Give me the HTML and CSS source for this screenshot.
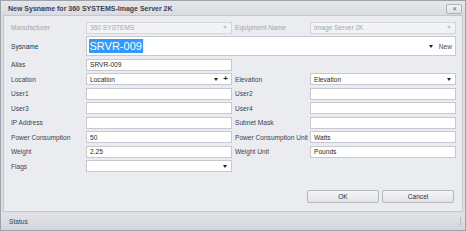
FILE: index.html
```html
<!DOCTYPE html>
<html>
<head>
<meta charset="utf-8">
<link rel="stylesheet" href="styles.css">
</head>
<body>
<div class="window">
  <div class="titlebar">
    <span class="title">New Sysname for 360 SYSTEMS-Image Server 2K</span>
    <span class="close">✕</span>
  </div>
  <div class="content">
    <div class="grid">
      <div class="label disabled">Manufacturer</div>
      <div class="field dis combo"><span>360 SYSTEMS</span><i class="arrow light"></i></div>
      <div class="label r disabled">Equipment Name</div>
      <div class="field dis combo"><span>Image Server 2K</span><i class="arrow light"></i></div>

      <div class="label strong">Sysname</div>
      <div class="field big span3"><span class="sel">SRVR-009</span><i class="arrow"></i><span class="new">New</span></div>

      <div class="label">Alias</div>
      <div class="field"><span>SRVR-009</span></div>
      <div></div><div></div>

      <div class="label">Location</div>
      <div class="field combo"><span>Location</span><i class="arrow"></i><span class="plus">+</span></div>
      <div class="label r">Elevation</div>
      <div class="field combo"><span>Elevation</span><i class="arrow"></i></div>

      <div class="label">User1</div>
      <div class="field"></div>
      <div class="label r">User2</div>
      <div class="field"></div>

      <div class="label">User3</div>
      <div class="field"></div>
      <div class="label r">User4</div>
      <div class="field"></div>

      <div class="label">IP Address</div>
      <div class="field"></div>
      <div class="label r">Subnet Mask</div>
      <div class="field"></div>

      <div class="label">Power Consumption</div>
      <div class="field"><span>50</span></div>
      <div class="label r">Power Consumption Unit</div>
      <div class="field"><span>Watts</span></div>

      <div class="label">Weight</div>
      <div class="field"><span>2.25</span></div>
      <div class="label r">Weight Unit</div>
      <div class="field"><span>Pounds</span></div>

      <div class="label">Flags</div>
      <div class="field combo"><span></span><i class="arrow"></i></div>
      <div></div><div></div>
    </div>
    <div class="buttons">
      <div class="btn">OK</div>
      <div class="btn">Cancel</div>
    </div>
  </div>
  <div class="statusbar"><span>Status</span><i class="grip"></i></div>
</div>
</body>
</html>
```
FILE: styles.css
```css
* { box-sizing: border-box; }
html, body { margin: 0; padding: 0; }
body {
  width: 466px;
  height: 231px;
  overflow: hidden;
  font-family: "Liberation Sans", Arial, sans-serif;
  font-size: 6.6px;
  color: #3a3a3a;
  background: #d6d8dd;
}
.window {
  width: 466px;
  height: 231px;
  border: 1px solid #9ea2a9;
  background: #dcdee3;
  display: flex;
  flex-direction: column;
}
.titlebar {
  height: 14px;
  display: flex;
  align-items: center;
  padding: 0 3px 0 7px;
  background: linear-gradient(#e6e7eb, #d9dbe0);
}
.title {
  font-weight: bold;
  font-size: 7px;
  color: #3e4149;
  flex: 1;
}
.close {
  width: 16px;
  height: 10px;
  margin-top: 2px;
  border: 1px solid #aeb2b8;
  border-radius: 2px;
  background: linear-gradient(#f4f4f6, #dfe1e5);
  font-size: 6px;
  line-height: 8px;
  text-align: center;
  color: #666a70;
}
.content {
  margin: 0 2px;
  height: 197px;
  background: #ebecf0;
  border: 1px solid #c3c6cc;
  padding: 5.5px 7px 0 7px;
  display: flex;
  flex-direction: column;
}
.grid {
  display: grid;
  grid-template-columns: 75px 146px 78px 146px;
  grid-template-rows: 12px 20px repeat(8, 12px);
  row-gap: 2.5px;
  column-gap: 0;
}
.label {
  display: flex;
  align-items: center;
  white-space: nowrap;
  color: #404350;
}
.label.r { padding-left: 3px; }
.label.strong { color: #2c2e36; }
.label.disabled { color: #a3a5aa; }
.field {
  background: #fff;
  border: 1px solid #c6c9cf;
  display: flex;
  align-items: center;
  padding: 0 3px;
  color: #2a2a2a;
  overflow: hidden;
  white-space: nowrap;
}
.field > span:first-child { flex: 1; }
.field.dis {
  background: #f2f3f5;
  border-color: #d4d6da;
  color: #a5a7ab;
}
.span3 { grid-column: 2 / span 3; }
.field.big { padding-left: 1.5px; }
.field.big .sel {
  flex: 0 0 auto;
  font-size: 11px;
  background: #3399ff;
  color: #fff;
  padding: 0 1px;
  line-height: 14px;
  margin-right: auto;
}
.arrow {
  display: inline-block;
  width: 0;
  height: 0;
  border-left: 2.5px solid transparent;
  border-right: 2.5px solid transparent;
  border-top: 3px solid #222;
  margin: 0 1px;
}
.arrow.light { border-top-color: #c4c6ca; }
.new {
  margin-left: 5px;
  color: #3c4a66;
}
.plus {
  margin-left: 4px;
  font-weight: bold;
  font-size: 8px;
  line-height: 8px;
  color: #222;
}
.buttons {
  display: flex;
  justify-content: flex-end;
  gap: 3px;
  margin-top: 18px;
  padding-right: 1px;
}
.btn {
  width: 72px;
  height: 13px;
  border: 1px solid #b3b7be;
  border-radius: 2px;
  background: linear-gradient(#f5f5f7, #e2e4e8);
  display: flex;
  align-items: center;
  justify-content: center;
  color: #2e3038;
}
.statusbar {
  height: 17px;
  margin: 1px 0 0 0;
  background: linear-gradient(#e2e3e7, #d3d5da);
  display: flex;
  align-items: center;
  padding: 0 4px 0 8px;
  color: #3a3d46;
}
.statusbar span { flex: 1; }
.grip {
  width: 1px;
  height: 9px;
  background: #b8bbc1;
}
```
